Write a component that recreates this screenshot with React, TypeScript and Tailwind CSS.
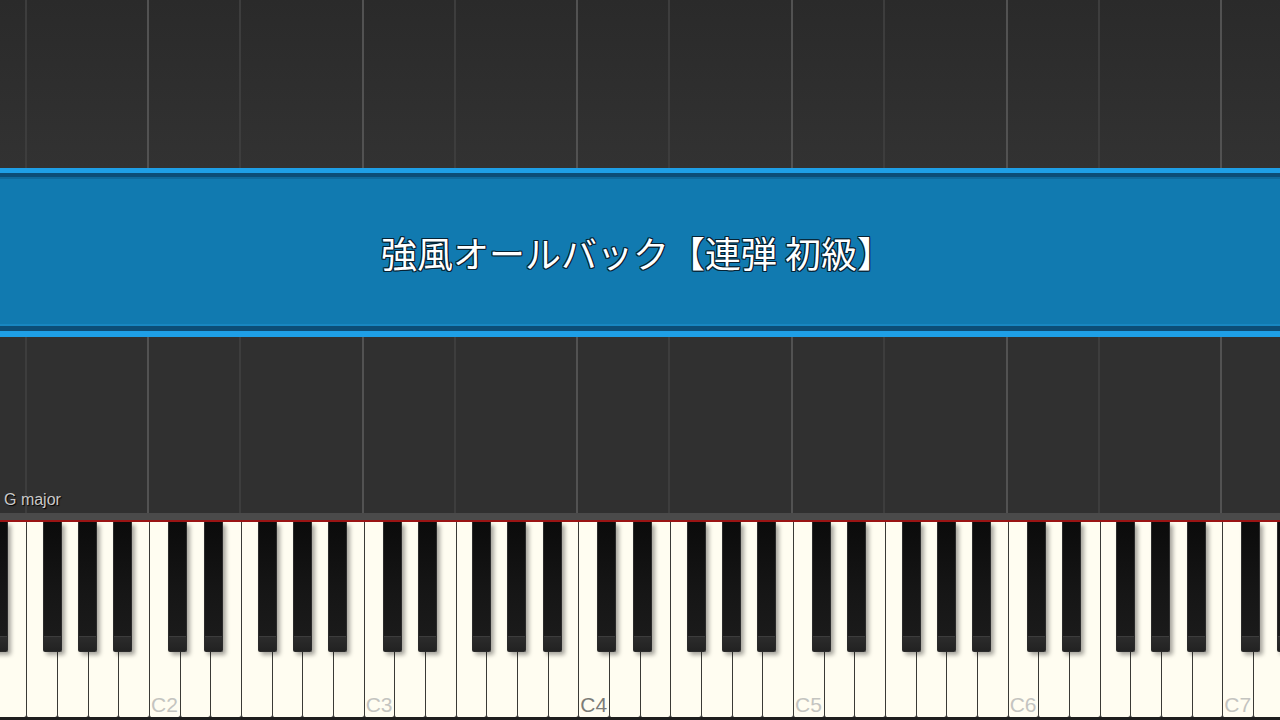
const OCTAVES = [1, 2, 3, 4, 5, 6, 7];
const WHITE = ['C', 'D', 'E', 'F', 'G', 'A', 'B'];
// 黒鍵の左端 (オクターブ先頭からのpx)
const BLACK_LEFT = [19, 54.5, 108.7, 143.8, 179];

/** ピアノロールの縦線。Cは明るめ、Fは暗め。 */
function GridLines() {
  return (
    <div className="flex h-full -ml-[67.5px]">
      {OCTAVES.map((o) => (
        <div key={o} className="flex shrink-0">
          <div className="w-[92px] shrink-0 border-l-2 border-[#525252]" />
          <div className="w-[122.67px] shrink-0 border-l-2 border-[#3d3d3d]" />
        </div>
      ))}
    </div>
  );
}

function BlackKey({ left }: { left: number }) {
  return (
    <div
      className="absolute top-0 w-[19px] h-[130px] flex flex-col rounded-b-[2px] border-x border-b border-[#2b2b2b] bg-gradient-to-b from-[#0b0b0b] via-[#151515] to-[#1c1c1c] shadow-[3px_3px_4px_rgba(0,0,0,0.35)]"
      style={{ left }}
    >
      <div className="flex-1" />
      <div className="h-[15px] border-t border-[#3c3c3c] bg-gradient-to-b from-[#2c2c2c] to-[#222]" />
    </div>
  );
}

function Octave({ n }: { n: number }) {
  return (
    <div className="relative flex w-[214.67px] shrink-0 h-full">
      {WHITE.map((w) => (
        <div
          key={w}
          className="flex-1 h-full border-l border-[#3a3a36] bg-[#fffdf1] flex items-end pl-[1px] pb-[2px] rounded-b-[2px]"
        >
          {w === 'C' && n >= 2 && (
            <span
              className={`text-[21px] leading-none ${n === 4 ? 'text-[#7c7c78]' : 'text-[#c4c4c0]'}`}
            >
              C{n}
            </span>
          )}
        </div>
      ))}
      {BLACK_LEFT.map((l) => (
        <BlackKey key={l} left={l} />
      ))}
    </div>
  );
}

export default function App() {
  return (
    <div
      className="w-[1280px] h-[720px] overflow-hidden bg-[#303030] flex flex-col"
      style={{ fontFamily: '"Liberation Sans", "Noto Sans CJK JP", sans-serif' }}
    >
      {/* 上のグリッド */}
      <div className="h-[168px] shrink-0 overflow-hidden bg-gradient-to-b from-[#2a2a2a] to-[#323232]">
        <GridLines />
      </div>

      {/* タイトル帯 */}
      <div className="h-[169px] shrink-0 flex flex-col">
        <div className="h-[5px] bg-[#1e9fe6]" />
        <div className="h-[4px] bg-[#0c4d76]" />
        <div className="h-[2px] bg-[#0f6a9c]" />
        <div className="flex-1 bg-[#117ab0] flex items-center justify-center">
          <h1
            className="text-[36px] leading-none text-white [text-shadow:1px_1px_0_#062233,-1px_-1px_0_#062233,1px_-1px_0_#062233,-1px_1px_0_#062233,0_1px_0_#062233,0_-1px_0_#062233,1px_0_0_#062233,-1px_0_0_#062233] -translate-x-[3px]"
            style={{ fontFamily: '"Noto Sans CJK JP", sans-serif' }}
          >
            強風オールバック【連弾 初級】
          </h1>
        </div>
        <div className="h-[2px] bg-[#1886c0]" />
        <div className="h-[5px] bg-[#0c4d76]" />
        <div className="h-[6px] bg-[#1e9fe6]" />
      </div>

      {/* 下のグリッド */}
      <div className="relative h-[176px] shrink-0 overflow-hidden bg-[#303030]">
        <GridLines />
        <span className="absolute left-[4px] bottom-[5px] text-[16px] leading-none text-[#c9c9c9] [text-shadow:1px_1px_1px_#000]">
          G major
        </span>
      </div>

      {/* 鍵盤 */}
      <div className="h-[7px] shrink-0 bg-[#4a4a4a]" />
      <div className="h-[2px] shrink-0 bg-[#9a1414]" />
      <div className="h-[195px] shrink-0 overflow-hidden">
        <div className="flex h-full -ml-[65.67px]">
          {OCTAVES.map((n) => (
            <Octave key={n} n={n} />
          ))}
        </div>
      </div>
      <div className="flex-1 bg-[#1e1e1e]" />
    </div>
  );
}
